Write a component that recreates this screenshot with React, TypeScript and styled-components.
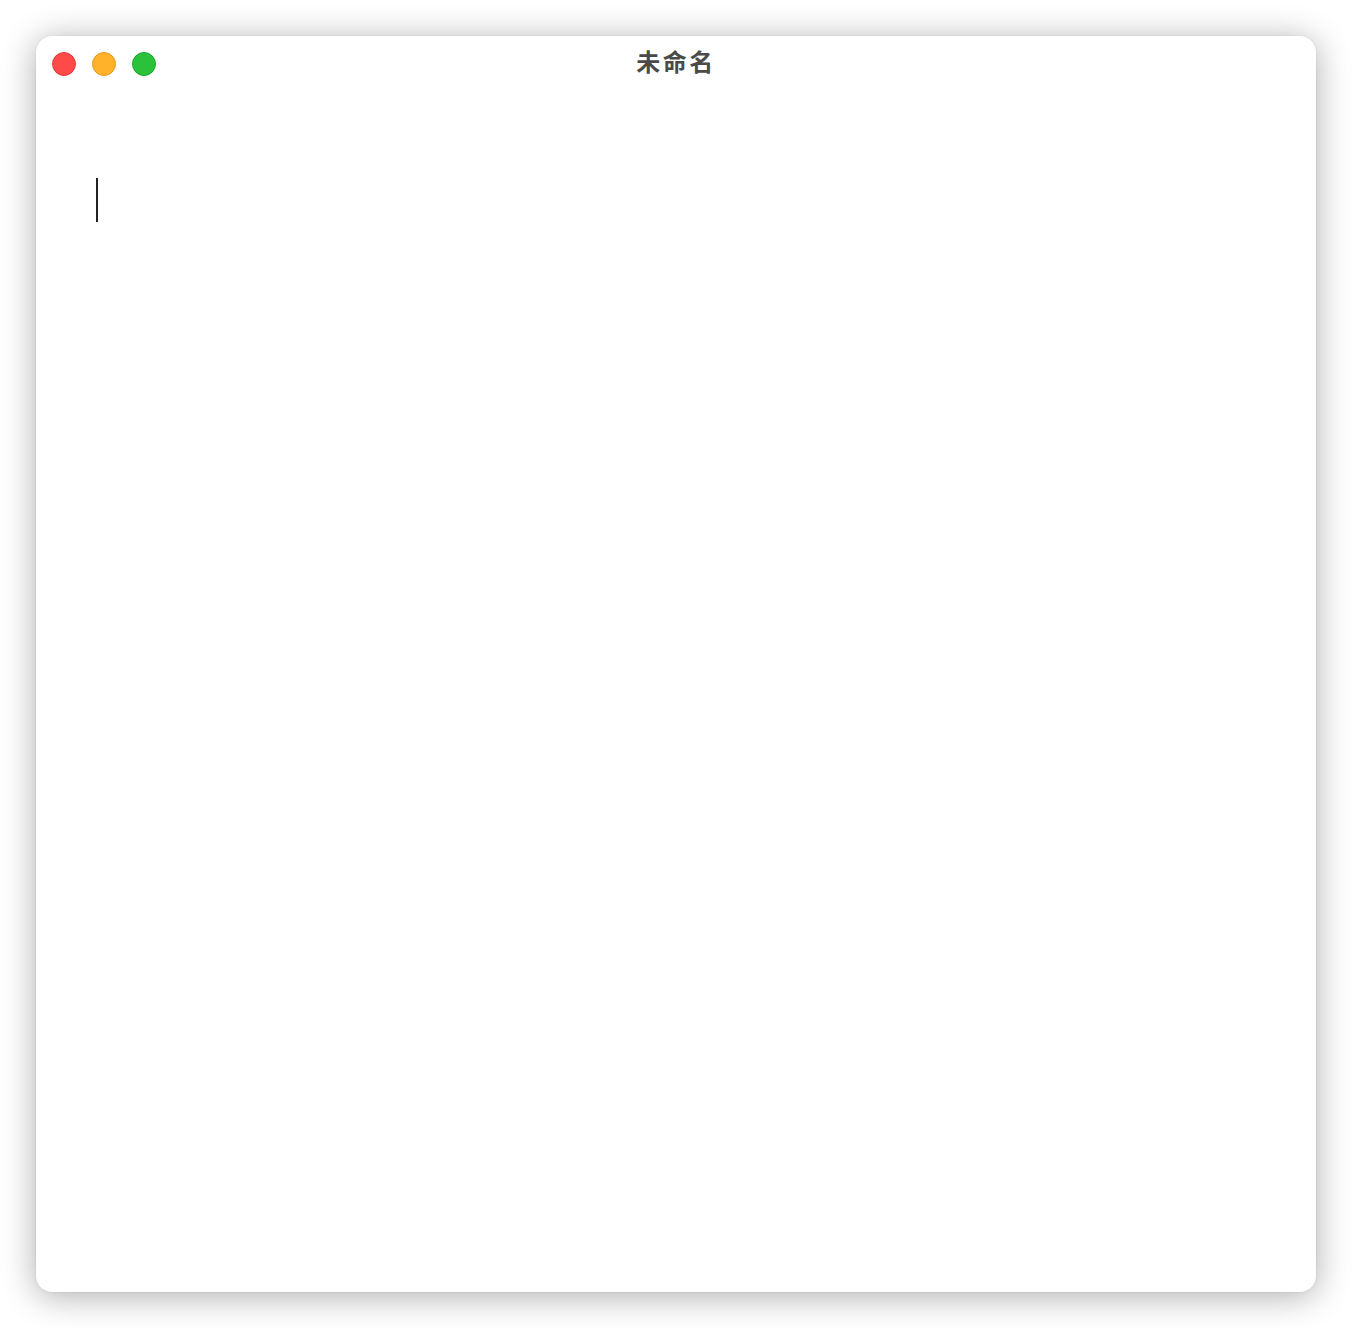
import React from "react";
import styled, { createGlobalStyle } from "styled-components";

const Global = createGlobalStyle`
  html, body { margin: 0; padding: 0; background: #ffffff; }
  body { font-family: "Noto Sans CJK SC", "Noto Sans", sans-serif; }
`;

const Stage = styled.div`
  padding: 36px;
  width: 1352px;
  height: 1328px;
  box-sizing: border-box;
`;

const Window = styled.div`
  width: 1280px;
  height: 1256px;
  background: #ffffff;
  border-radius: 16px;
  box-shadow: 0 4px 34px rgba(0, 0, 0, 0.33), 0 0 2px rgba(0, 0, 0, 0.12);
  display: flex;
  flex-direction: column;
  overflow: hidden;
`;

const TitleBar = styled.div`
  position: relative;
  height: 56px;
  display: flex;
  align-items: center;
  justify-content: center;
  padding: 0 16px;
`;

const Lights = styled.div`
  position: absolute;
  left: 16px;
  top: 16px;
  display: flex;
  gap: 16px;
`;

const Light = styled.span<{ $fill: string; $edge: string }>`
  width: 24px;
  height: 24px;
  border-radius: 50%;
  box-sizing: border-box;
  background: ${(p) => p.$fill};
  border: 1px solid ${(p) => p.$edge};
`;

const Title = styled.div`
  font-family: "Noto Sans CJK SC", "Noto Sans", sans-serif;
  font-weight: 700;
  font-size: 24px;
  letter-spacing: 2.5px;
  color: #4a4a4a;
  line-height: 1;
  margin-bottom: 7px;
`;

const Editor = styled.div`
  flex: 1;
  padding: 86px 60px;
`;

const Caret = styled.div`
  width: 2px;
  height: 44px;
  background: #222222;
`;

export default function App() {
  return (
    <>
      <Global />
      <Stage>
        <Window>
          <TitleBar>
            <Lights>
              <Light $fill="#ff4a4a" $edge="#e3403e" />
              <Light $fill="#ffb22a" $edge="#e29a1c" />
              <Light $fill="#29c23a" $edge="#1fa830" />
            </Lights>
            <Title>未命名</Title>
          </TitleBar>
          <Editor>
            <Caret />
          </Editor>
        </Window>
      </Stage>
    </>
  );
}
